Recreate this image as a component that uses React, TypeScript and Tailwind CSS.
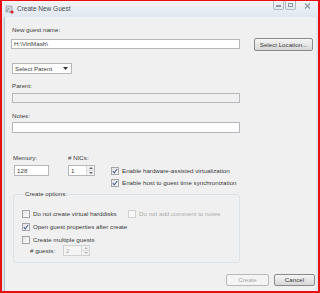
import React from 'react';

const font = "font-['Liberation_Sans',Arial,sans-serif]";

function Check({ checked, disabled }: { checked?: boolean; disabled?: boolean }) {
  return (
    <span
      className={`relative inline-flex w-[8px] h-[8px] shrink-0 items-center justify-center border ${
        disabled ? 'border-[#d0d0d0] bg-[#f7f7f7]' : 'border-[#a2a6aa] bg-gradient-to-br from-[#e2e2e2] to-[#fbfbfb]'
      }`}
    >
      {checked && (
        <svg width="6" height="6" viewBox="0 0 6 6">
          <path d="M0.8 3.2 L2.3 4.8 L5.2 1" fill="none" stroke="#4a62a0" strokeWidth="1.1" />
        </svg>
      )}
    </span>
  );
}

function Spinner({ value, disabled }: { value: string; disabled?: boolean }) {
  return (
    <div
      className={`flex w-[27px] h-[11px] border ${disabled ? 'border-[#cdd0d4] bg-[#f4f4f4] text-[#a8a8a8]' : 'border-[#b5b7bc] bg-white'}`}
    >
      <span className="flex-1 pl-[2px] leading-[9px]">{value}</span>
      <div className="w-[8px] flex flex-col border-l border-[#dadada] bg-[#f2f2f2]">
        <span className="flex-1 flex items-center justify-center border-b border-[#dadada]">
          <svg width="4" height="2" viewBox="0 0 4 2"><path d="M0 2 L2 0 L4 2Z" fill={disabled ? '#b8b8b8' : '#666'} /></svg>
        </span>
        <span className="flex-1 flex items-center justify-center">
          <svg width="4" height="2" viewBox="0 0 4 2"><path d="M0 0 L2 2 L4 0Z" fill={disabled ? '#b8b8b8' : '#666'} /></svg>
        </span>
      </div>
    </div>
  );
}

export default function App() {
  return (
    <div className={`${font} w-[320px] h-[293px] overflow-hidden border-l-2 border-r-2 border-t border-b-2 border-[#e81010] bg-[#dfe6ed] flex flex-col text-[6.2px] text-[#3a3a3a]`}>
      {/* title bar */}
      <div className="h-[16px] shrink-0 flex items-center bg-gradient-to-b from-[#f2f5f9] to-[#e0e7ef]">
        <svg width="9" height="9" viewBox="0 0 9 9" className="ml-[3px]">
          <rect x="1" y="1" width="6" height="6" fill="#cfd2d8" stroke="#8a919b" strokeWidth="0.6" />
          <path d="M1 7 L4 3" stroke="#7a828c" strokeWidth="0.8" />
          <circle cx="7" cy="7" r="1.6" fill="#d02020" />
        </svg>
        <span className="ml-[3px] text-[6.5px] text-[#4a4a4a]">Create New Guest</span>
        <div className="ml-auto self-start flex items-start mr-[1px]">
          <div className="w-[11px] h-[9px] border border-t-0 border-[#b0bac5] rounded-b-[2px] flex items-end justify-center pb-[2px] bg-gradient-to-b from-[#f3f6f9] to-[#e2e8ef]">
            <span className="w-[5px] h-[2px] border border-[#8e98a4]" />
          </div>
          <div className="ml-[1px] w-[11px] h-[9px] border border-t-0 border-[#b0bac5] rounded-b-[2px] flex items-center justify-center bg-gradient-to-b from-[#f3f6f9] to-[#e2e8ef]">
            <span className="w-[5px] h-[4px] border border-[#8e98a4]" />
          </div>
          <div className="ml-[1px] w-[20px] h-[9px] flex items-center justify-center">
            <svg width="7" height="6" viewBox="0 0 7 6">
              <path d="M1 0.5 L6 5.5 M6 0.5 L1 5.5" stroke="#8d98a5" strokeWidth="1.3" />
            </svg>
          </div>
        </div>
      </div>

      {/* body */}
      <div className="flex-1 mx-[2px] border-l border-[#b4bcc5] bg-[#f0f0f0] flex flex-col pl-[6px] pr-[1px]">
        <div className="mt-[9px] ml-[1px] leading-[8px]">New guest name:</div>
        <div className="mt-[4px] flex items-start">
          <div className="mt-[1px] w-[229px] h-[10px] border border-[#b5b7bc] bg-white pl-[2px] leading-[8px]">H:\VirtMash\</div>
          <button className="ml-[14px] w-[59px] h-[13px] rounded-[2px] border border-[#8a8a8a] bg-gradient-to-b from-[#f5f5f5] to-[#d8d8d8] leading-[11px] text-center">
            Select Location...
          </button>
        </div>

        <div className="mt-[12px] ml-[1px] w-[60px] h-[11px] border border-[#b5b7bc] bg-white flex items-center pl-[2px]">
          <span className="flex-1 leading-[9px]">Select Parent</span>
          <svg width="5" height="3" viewBox="0 0 5 3" className="mr-[3px]"><path d="M0 0 L5 0 L2.5 3Z" fill="#333" /></svg>
        </div>

        <div className="mt-[8px] ml-[1px] leading-[8px]">Parent:</div>
        <div className="mt-[3px] ml-[1px] w-[228px] h-[10px] border border-[#b5b7bc] bg-[#f0f0f0]" />

        <div className="mt-[9px] ml-[1px] leading-[8px]">Notes:</div>
        <div className="mt-[2px] ml-[1px] w-[228px] h-[11px] border border-[#b5b7bc] bg-white" />

        {/* memory / nics / options */}
        <div className="mt-[21px] flex items-start">
          <div className="w-[57px] pl-[2px] flex flex-col">
            <span className="leading-[8px]">Memory:</span>
            <div className="mt-[3px] ml-[1px] w-[35px] h-[11px] border border-[#b5b7bc] bg-white pl-[2px] leading-[9px]">128</div>
          </div>
          <div className="w-[43px] flex flex-col">
            <span className="leading-[8px]"># NICs:</span>
            <div className="mt-[3px]"><Spinner value="1" /></div>
          </div>
          <div className="mt-[13px] flex flex-col gap-[4px]">
            <label className="flex items-center gap-[3px] leading-[8px]"><Check checked />Enable hardware-assisted virtualization</label>
            <label className="flex items-center gap-[3px] leading-[8px]"><Check checked />Enable host to guest time synchronization</label>
          </div>
        </div>

        <fieldset className="mt-[3px] ml-[2px] w-[227px] h-[73px] border border-[#dbe3e8] rounded-[3px] pl-[8px] pr-0 pt-[12px] pb-0 m-0 min-w-0">
          <legend className="ml-[2px] px-[1px] leading-[8px]">Create options:</legend>
          <div className="flex items-center">
            <label className="flex items-center gap-[3px] leading-[8px] w-[106px]"><Check />Do not create virtual harddisks</label>
            <label className="flex items-center gap-[3px] leading-[8px] text-[#ababab]"><Check disabled />Do not add comment to notes</label>
          </div>
          <label className="mt-[5px] flex items-center gap-[3px] leading-[8px]"><Check checked />Open guest properties after create</label>
          <label className="mt-[5px] flex items-center gap-[3px] leading-[8px]"><Check />Create multiple guests</label>
          <div className="mt-[1px] flex items-center">
            <span className="ml-[8px] w-[33px] leading-[8px]"># guests:</span>
            <Spinner value="2" disabled />
          </div>
        </fieldset>

        <div className="mt-[11px] flex justify-end gap-[5px]">
          <button className="w-[43px] h-[12px] rounded-[2px] border border-[#b6babd] bg-[#f4f4f4] text-[#a8a8a8] leading-[10px]">Create</button>
          <button className="w-[41px] h-[12px] rounded-[2px] border border-[#8a8a8a] bg-gradient-to-b from-[#f5f5f5] to-[#d8d8d8] leading-[10px]">Cancel</button>
        </div>
      </div>
    </div>
  );
}
